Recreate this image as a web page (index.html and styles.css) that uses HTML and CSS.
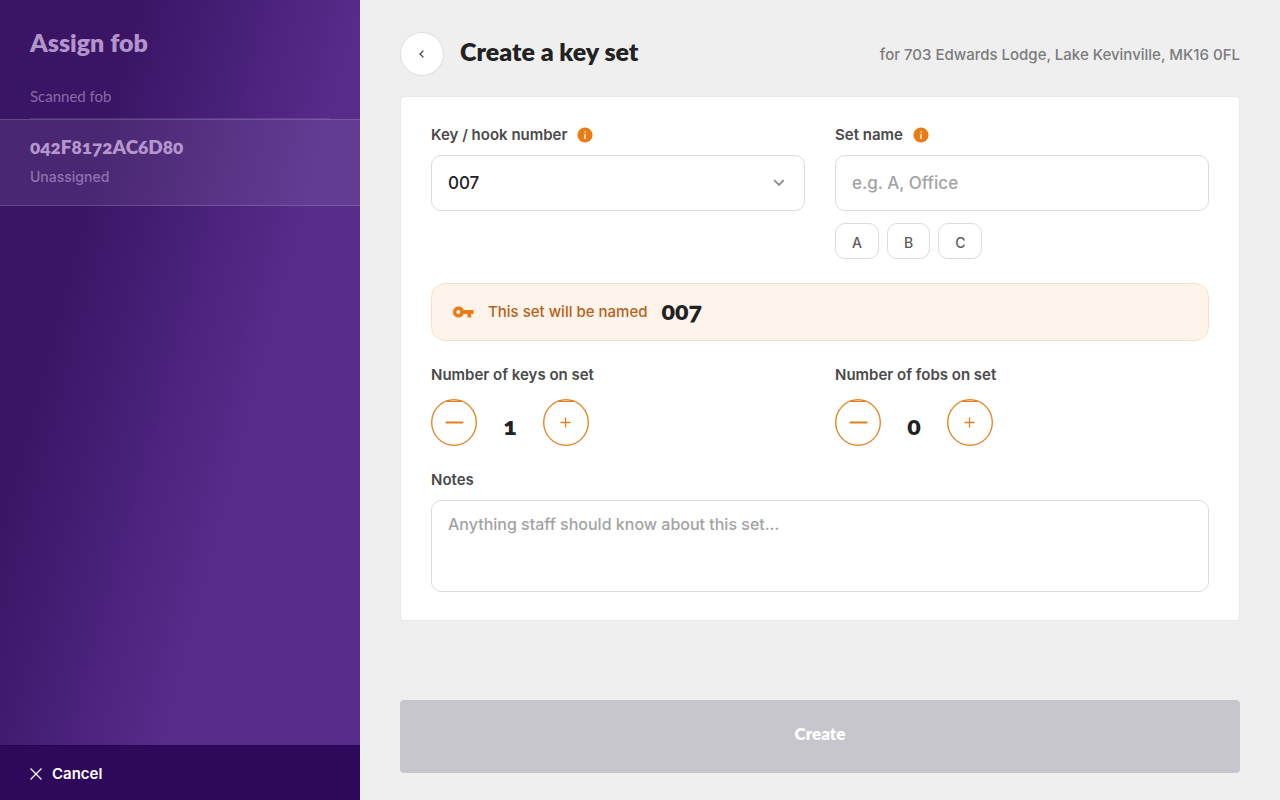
FILE: index.html
```html
<!DOCTYPE html>
<html lang="en">
<head>
    <meta charset="UTF-8">
    <meta name="viewport" content="width=device-width, initial-scale=1.0">
    <title>Create a key set</title>
    <link rel="stylesheet" href="styles.css">
</head>
<body>
    <div class="app">
        <aside class="sidebar">
            <h2 class="sidebar-title">Assign fob</h2>
            <div class="sidebar-label">Scanned fob</div>
            <div class="fob">
                <div class="fob-id">042F8172AC6D80</div>
                <div class="fob-status">Unassigned</div>
            </div>
            <button type="button" class="cancel">
                <svg width="12" height="12" viewBox="0 0 12 12" fill="none" stroke="currentColor" stroke-width="1.2"><path d="M0.5 0.5l11 11M11.5 0.5l-11 11"/></svg>
                Cancel
            </button>
        </aside>

        <main class="main">
            <header class="header">
                <button type="button" class="back" aria-label="Back">
                    <svg width="6" height="8" viewBox="0 0 6 8" fill="none" stroke="currentColor" stroke-width="1.3"><path d="M4.4 0.6L1 4l3.4 3.4"/></svg>
                </button>
                <h1>Create a key set</h1>
                <p class="address">for 703 Edwards Lodge, Lake Kevinville, MK16 0FL</p>
            </header>

            <form class="card" id="key-set">
                <div class="row">
                    <div class="field">
                        <div class="label-row">
                            <label for="hook">Key / hook number</label>
                            <svg class="info" width="16" height="16" viewBox="0 0 16 16"><circle cx="8" cy="8" r="7.6" fill="#ea7c16"/><path d="M7.2 7h1.7v5H7.2zM7.2 4.2h1.7v1.6H7.2z" fill="#fde3c8"/></svg>
                        </div>
                        <div class="select-wrap">
                            <select id="hook" class="control">
                                <option>007</option>
                            </select>
                            <svg class="chevron" width="12" height="8" viewBox="0 0 12 8" fill="none" stroke="#8c8c8c" stroke-width="1.8"><path d="M1.2 1.2l4.8 4.8 4.8-4.8"/></svg>
                        </div>
                    </div>
                    <div class="field">
                        <div class="label-row">
                            <label for="name">Set name</label>
                            <svg class="info" width="16" height="16" viewBox="0 0 16 16"><circle cx="8" cy="8" r="7.6" fill="#ea7c16"/><path d="M7.2 7h1.7v5H7.2zM7.2 4.2h1.7v1.6H7.2z" fill="#fde3c8"/></svg>
                        </div>
                        <input type="text" id="name" class="control" placeholder="e.g. A, Office">
                        <div class="chips">
                            <button type="button" class="chip">A</button>
                            <button type="button" class="chip">B</button>
                            <button type="button" class="chip">C</button>
                        </div>
                    </div>
                </div>

                <div class="preview">
                    <svg width="22" height="12" viewBox="0 0 22 12" fill="#ea7c16"><path fill-rule="evenodd" d="M11.7 4A5.6 5.6 0 1 0 11.7 8H15.5V11.6H19.2V8H21.5V4ZM6.3 8a2 2 0 1 1 0-4a2 2 0 0 1 0 4Z"/></svg>
                    <span class="preview-text">This set will be named</span>
                    <strong class="preview-name">007</strong>
                </div>

                <div class="row">
                    <div class="field">
                        <div class="label-row"><label for="keys">Number of keys on set</label></div>
                        <div class="stepper">
                            <button type="button" class="step" aria-label="Fewer keys">
                                <svg width="46" height="47" viewBox="0 0 46 47" fill="none" stroke="currentColor" stroke-width="1.3"><ellipse cx="23" cy="23.5" rx="22.3" ry="22.8"/><path d="M15 2.4h16"/><path d="M15.5 23.5h16" stroke-width="2" stroke-linecap="round"/></svg>
                            </button>
                            <output id="keys" class="count">1</output>
                            <button type="button" class="step" aria-label="More keys">
                                <svg width="46" height="47" viewBox="0 0 46 47" fill="none" stroke="currentColor" stroke-width="1.3"><ellipse cx="23" cy="23.5" rx="22.3" ry="22.8"/><path d="M15 2.4h16"/><path d="M17.5 23.5h10M22.5 18.5v10"/></svg>
                            </button>
                        </div>
                    </div>
                    <div class="field">
                        <div class="label-row"><label for="fobs">Number of fobs on set</label></div>
                        <div class="stepper">
                            <button type="button" class="step" aria-label="Fewer fobs">
                                <svg width="46" height="47" viewBox="0 0 46 47" fill="none" stroke="currentColor" stroke-width="1.3"><ellipse cx="23" cy="23.5" rx="22.3" ry="22.8"/><path d="M15 2.4h16"/><path d="M15.5 23.5h16" stroke-width="2" stroke-linecap="round"/></svg>
                            </button>
                            <output id="fobs" class="count">0</output>
                            <button type="button" class="step" aria-label="More fobs">
                                <svg width="46" height="47" viewBox="0 0 46 47" fill="none" stroke="currentColor" stroke-width="1.3"><ellipse cx="23" cy="23.5" rx="22.3" ry="22.8"/><path d="M15 2.4h16"/><path d="M17.5 23.5h10M22.5 18.5v10"/></svg>
                            </button>
                        </div>
                    </div>
                </div>

                <div class="field">
                    <div class="label-row"><label for="notes">Notes</label></div>
                    <textarea id="notes" class="control notes" placeholder="Anything staff should know about this set..."></textarea>
                </div>
            </form>

            <button type="submit" form="key-set" class="create" disabled>Create</button>
        </main>
    </div>
</body>
</html>
```
FILE: styles.css
```css
* {
    box-sizing: border-box;
}
body {
    margin: 0;
    font-family: Inter, sans-serif;
    font-size: 15px;
    font-weight: 500;
    line-height: 20px;
    background: #efefef;
    color: #222;
}
button, input, select, textarea {
    font: inherit;
}
button {
    cursor: pointer;
}
svg {
    display: block;
    flex: none;
}
h1, h2, p {
    margin: 0;
}
.app {
    display: flex;
    min-height: 100vh;
}

/* Sidebar */
.sidebar {
    width: 360px;
    flex: none;
    display: flex;
    flex-direction: column;
    background: linear-gradient(105deg, #3a1566 24%, #572b8a 63%);
}
.sidebar-title {
    padding: 26px 30px 0;
    font: 800 25px/32px Lato, sans-serif;
    color: #b294cb;
}
.sidebar-label {
    margin: 28px 30px 0;
    padding-bottom: 12px;
    border-bottom: 1px solid rgba(255, 255, 255, 0.12);
    font: 15px/20px Lato, sans-serif;
    color: #8c68a9;
}
.fob {
    padding: 15px 30px 18px;
    border-top: 1px solid rgba(255, 255, 255, 0.15);
    border-bottom: 1px solid rgba(255, 255, 255, 0.15);
    background: rgba(255, 255, 255, 0.08);
}
.fob-id {
    font: 800 19px/24px Lato, sans-serif;
    font-variant-numeric: oldstyle-nums;
    color: #b497cd;
}
.fob-status {
    margin-top: 8px;
    font-size: 14px;
    color: #9272b0;
}
.cancel {
    display: flex;
    align-items: center;
    gap: 10px;
    height: 55px;
    margin-top: auto;
    padding: 2px 30px 0;
    border: 0;
    border-top: 1px solid #25054d;
    background: #2d085b;
    color: #fff;
    font-weight: 600;
}

/* Main */
.main {
    flex: 1;
    min-width: 0;
    display: flex;
    flex-direction: column;
    padding: 32px 40px 27px;
}
.header {
    display: flex;
    align-items: center;
    gap: 16px;
    margin-bottom: 20px;
}
.back {
    display: flex;
    align-items: center;
    justify-content: center;
    width: 44px;
    height: 44px;
    padding: 0;
    border: 1px solid #ddd;
    border-radius: 50%;
    background: #fff;
    color: #444;
}
h1 {
    padding-bottom: 7px;
    font: 800 25px/32px Lato, sans-serif;
}
.address {
    margin-left: auto;
    padding-top: 2px;
    color: #7c7c7c;
}
.card {
    display: flex;
    flex-direction: column;
    gap: 24px;
    padding: 28px 30px;
    border: 1px solid #e8e8e8;
    border-radius: 5px;
    background: #fff;
}
.row {
    display: grid;
    grid-template-columns: 1fr 1fr;
    gap: 30px;
}
.label-row {
    display: flex;
    align-items: center;
    gap: 10px;
    margin-bottom: 10px;
    color: #4a4a4a;
    font-weight: 600;
}
.control {
    display: block;
    width: 100%;
    height: 56px;
    padding: 0 16px;
    border: 1px solid #dcdcdc;
    border-radius: 10px;
    background: #fff;
    color: #222;
    font-size: 17px;
    appearance: none;
}
.control::placeholder {
    color: #a3a3a3;
}
.select-wrap {
    position: relative;
}
.chevron {
    position: absolute;
    right: 20px;
    top: 24px;
    pointer-events: none;
}
.chips {
    display: flex;
    gap: 8px;
    margin-top: 12px;
}
.chip {
    min-width: 43px;
    height: 36px;
    padding: 3px 16px 0;
    border: 1px solid #dcdcdc;
    border-radius: 10px;
    background: #fff;
    color: #5c5c5c;
    font-size: 14px;
}
.preview {
    display: flex;
    align-items: center;
    gap: 14px;
    height: 58px;
    padding: 0 20px;
    border: 1px solid #f7dfc6;
    border-radius: 14px;
    background: #fff4ec;
}
.preview-text {
    color: #b5621a;
}
.preview-name {
    padding-bottom: 5px;
    font: 800 25px/32px Lato, sans-serif;
    font-variant-numeric: oldstyle-nums;
}
.stepper {
    display: flex;
    align-items: center;
    padding-top: 4px;
}
.step {
    padding: 0;
    border: 0;
    background: none;
    color: #e2801f;
}
.count {
    width: 66px;
    padding-top: 4px;
    text-align: center;
    font: 800 25px/32px Lato, sans-serif;
    font-variant-numeric: oldstyle-nums;
}
.notes {
    height: 92px;
    padding: 11px 16px;
    font-size: 16px;
    line-height: 24px;
    resize: none;
}
.create {
    height: 73px;
    margin-top: auto;
    padding: 0 0 5px;
    border: 0;
    border-radius: 4px;
    background: #c7c6cc;
    color: #fff;
    font: 800 17px/24px Lato, sans-serif;
}
```
